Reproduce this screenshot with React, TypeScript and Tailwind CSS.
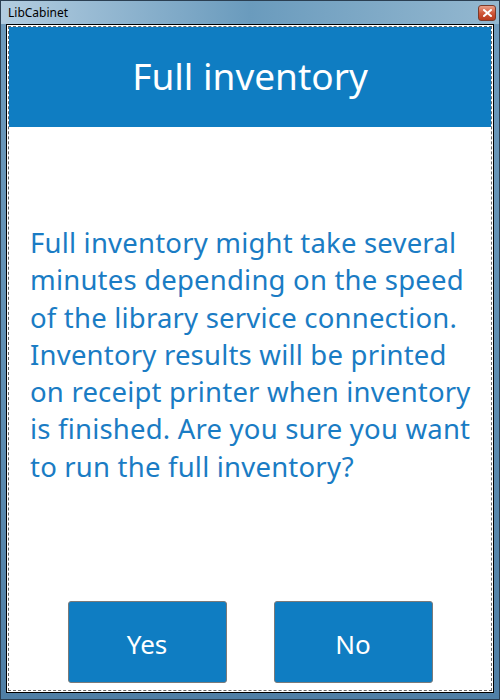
import React from "react";

const font = { fontFamily: '"Noto Sans", "Open Sans", sans-serif' };

export default function App() {
  return (
    <div
      className="w-[500px] h-[700px] flex flex-col border border-[#2b3f52] bg-gradient-to-b from-[#6f9bbd] via-[#5f8fb3] to-[#4f7fa6]"
      style={font}
    >
      {/* title bar */}
      <div className="h-[23px] flex items-center justify-between pl-[7px] pr-[3px] bg-gradient-to-r from-[#b3cde0] via-[#6a9bbd] to-[#94b8d0]">
        <span className="text-[12px] text-black leading-none">LibCabinet</span>
        <div className="w-[18px] h-[16px] rounded-[3px] border border-[#7a3a2a] bg-gradient-to-b from-[#e8a08a] via-[#d0583a] to-[#b8391c] flex items-center justify-center">
          <svg width="9" height="8" viewBox="0 0 9 8">
            <path d="M1 1 L8 7 M8 1 L1 7" stroke="#fff" strokeWidth="2" strokeLinecap="square" />
          </svg>
        </div>
      </div>

      {/* client area */}
      <div className="flex-1 mx-[5px] mb-[6px] border border-black bg-white p-px flex">
        <div className="flex-1 border border-dashed border-[#666] flex flex-col">
          <div className="h-[100px] bg-[#0f7dc2] flex items-center justify-center">
            <h1 className="text-white text-[37px] leading-none pb-[4px]">Full inventory</h1>
          </div>

          <div className="flex-1 pl-[21px] pt-[97px]">
            <p className="text-[#1a7cc4] text-[27.5px] leading-[37.3px] tracking-[0.2px] whitespace-nowrap">
              Full inventory might take several
              <br />
              minutes depending on the speed
              <br />
              of the library service connection.
              <br />
              Inventory results will be printed
              <br />
              on receipt printer when inventory
              <br />
              is finished. Are you sure you want
              <br />
              to run the full inventory?
            </p>
          </div>

          <div className="flex justify-center gap-[47px] pb-[7px]">
            <button className="w-[159px] h-[82px] rounded-[3px] border border-[#7a7a7a] bg-[#0f7dc2] text-white text-[26px] pt-[4px]">
              Yes
            </button>
            <button className="w-[159px] h-[82px] rounded-[3px] border border-[#7a7a7a] bg-[#0f7dc2] text-white text-[26px] pt-[4px]">
              No
            </button>
          </div>
        </div>
      </div>
    </div>
  );
}
